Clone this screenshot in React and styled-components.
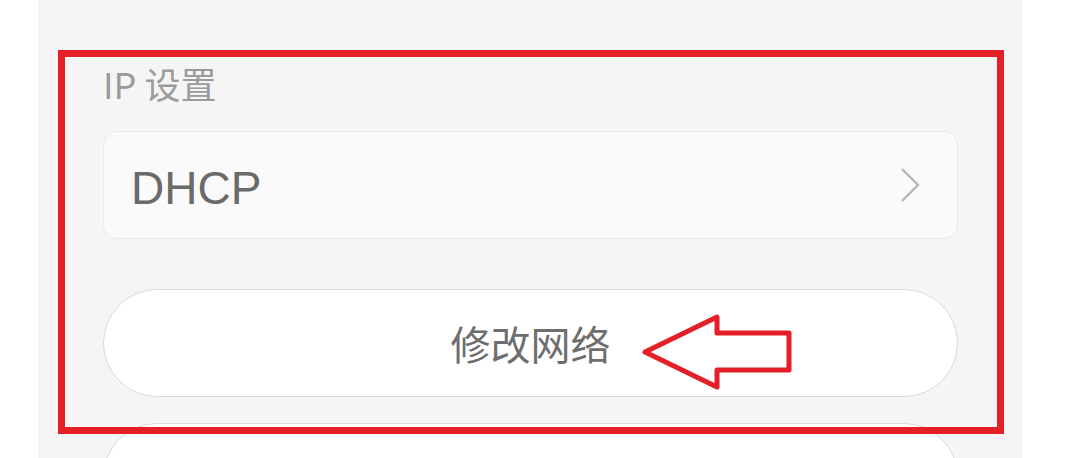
import styled, { createGlobalStyle } from "styled-components";

const GlobalStyle = createGlobalStyle`
  html, body {
    margin: 0;
    padding: 0;
    background: #ffffff;
    overflow: hidden;
  }
  body {
    font-family: "Noto Sans CJK SC", "Noto Sans", sans-serif;
  }
`;

const Page = styled.div`
  display: flex;
  height: 100vh;
  padding-left: 38px;
`;

const Panel = styled.div`
  position: relative;
  width: 984px;
  background: #f5f5f6;
  display: flex;
  flex-direction: column;
  padding: 65px 64px 0 65px;
  box-sizing: border-box;
`;

const SectionLabel = styled.div`
  flex-shrink: 0;
  font-size: 36px;
  line-height: 36px;
  color: #9b9b9b;
`;

const SelectCard = styled.div`
  flex-shrink: 0;
  margin-top: 30px;
  height: 108px;
  box-sizing: border-box;
  display: flex;
  align-items: center;
  justify-content: space-between;
  padding: 6px 36px 0 27px;
  background: #fafafa;
  border: 1px solid #ebebeb;
  border-radius: 14px;
`;

const SelectValue = styled.span`
  font-family: "Liberation Sans", Arial, sans-serif;
  font-size: 46px;
  line-height: 1;
  color: #6a6a6a;
`;

const Chevron = styled.svg`
  width: 22px;
  height: 36px;
  margin-top: -6px;
`;

const PillButton = styled.button`
  margin-top: ${({ $gap }) => $gap}px;
  height: 108px;
  flex-shrink: 0;
  width: 100%;
  background: #ffffff;
  border: 1px solid #d9d9d9;
  border-radius: 54px;
  font-family: "Noto Sans CJK SC", "Noto Sans", sans-serif;
  font-size: 40px;
  color: #6e6e6e;
  padding: 0;
  display: flex;
  align-items: center;
  justify-content: center;
`;

const Highlight = styled.div`
  position: absolute;
  left: 20px;
  top: 50px;
  width: 946px;
  height: 384px;
  box-sizing: border-box;
  border: 7px solid #e51f28;
  pointer-events: none;
`;

const Arrow = styled.svg`
  position: absolute;
  left: 602px;
  top: 312px;
  width: 155px;
  height: 80px;
  pointer-events: none;
`;

export default function App() {
  return (
    <>
      <GlobalStyle />
      <Page>
        <Panel>
          <SectionLabel>IP 设置</SectionLabel>
          <SelectCard>
            <SelectValue>DHCP</SelectValue>
            <Chevron viewBox="0 0 22 36">
              <path d="M3 2 L19 18 L3 34" fill="none" stroke="#b3b3b3" strokeWidth="2.2" />
            </Chevron>
          </SelectCard>
          <PillButton $gap={50}>修改网络</PillButton>
          <PillButton $gap={26}>取消保存</PillButton>
          <Highlight />
          <Arrow viewBox="0 0 155 80">
            <polygon
              points="5,40 77,5 77,21 149,21 149,58 77,58 77,75"
              fill="none"
              stroke="#e51f28"
              strokeWidth="5"
              strokeLinejoin="round"
            />
          </Arrow>
        </Panel>
      </Page>
    </>
  );
}
